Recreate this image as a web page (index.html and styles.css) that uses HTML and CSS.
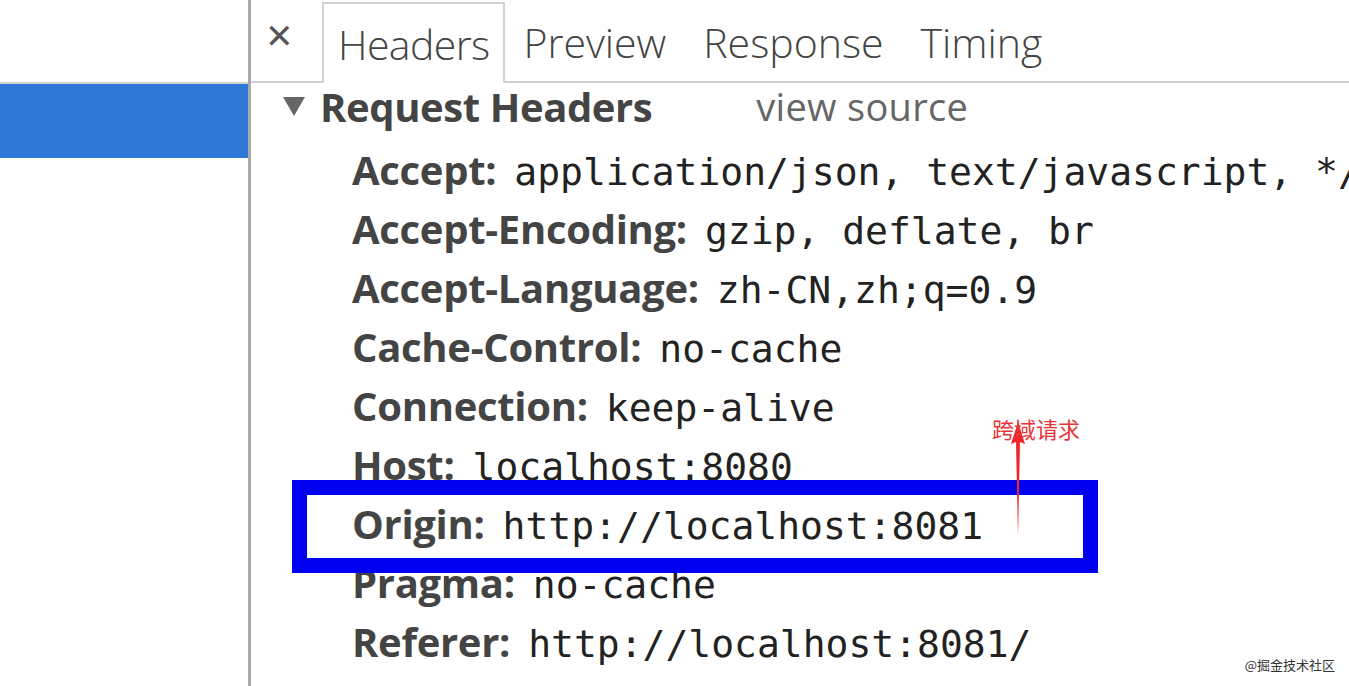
FILE: index.html
```html
<!DOCTYPE html>
<html lang="en">
<head>
  <meta charset="UTF-8">
  <title>Request Headers</title>
  <link rel="stylesheet" href="styles.css">
</head>
<body>
  <div class="page">
    <div class="sidebar">
      <div class="side-top"></div>
      <div class="side-selected"></div>
    </div>

    <div class="panel">
      <div class="tabs">
        <span class="close">&#x2715;</span>
        <span class="tab active">Headers</span>
        <span class="tab">Preview</span>
        <span class="tab">Response</span>
        <span class="tab">Timing</span>
      </div>

      <div class="section-title">
        <span class="arrow-down"></span>
        <span class="title">Request Headers</span>
        <span class="view-source">view source</span>
      </div>

      <div class="headers">
        <div class="row"><b>Accept:</b><span class="val">application/json, text/javascript, */*</span></div>
        <div class="row"><b>Accept-Encoding:</b><span class="val">gzip, deflate, br</span></div>
        <div class="row"><b>Accept-Language:</b><span class="val">zh-CN,zh;q=0.9</span></div>
        <div class="row"><b>Cache-Control:</b><span class="val">no-cache</span></div>
        <div class="row"><b>Connection:</b><span class="val">keep-alive</span></div>
        <div class="row"><b>Host:</b><span class="val">localhost:8080</span></div>
        <div class="row"><b>Origin:</b><span class="val">http://localhost:8081</span></div>
        <div class="row"><b>Pragma:</b><span class="val">no-cache</span></div>
        <div class="row"><b>Referer:</b><span class="val">http://localhost:8081/</span></div>
      </div>
    </div>

    <!-- annotations drawn over the screenshot -->
    <div class="mark-box"></div>
    <svg class="mark-arrow" width="20" height="120" viewBox="0 0 20 120">
      <polygon points="10,0 17,22 12,20 10,115 8,20 3,22" fill="#f0262a"/>
    </svg>
    <div class="mark-label">跨域请求</div>
    <div class="watermark">@掘金技术社区</div>
  </div>
</body>
</html>
```

FILE: styles.css
```css
* {
  box-sizing: border-box;
}

body {
  margin: 0;
  background: #fff;
  color: #333;
  font-family: "Open Sans", "Noto Sans", sans-serif;
}

.page {
  position: relative;
  display: flex;
  width: 1349px;
  height: 686px;
  overflow: hidden;
}

.sidebar {
  width: 251px;
  flex-shrink: 0;
  border-right: 3px solid #a9a9a9;
}

.side-top {
  height: 84px;
  border-bottom: 2px solid #d6d6d6;
}

.side-selected {
  height: 74px;
  background: #2f78d8;
}

.panel {
  flex: 1;
}

.tabs {
  display: flex;
  align-items: flex-end;
  height: 83px;
  border-bottom: 2px solid #cfcfcf;
  padding-left: 14px;
}

.close {
  align-self: center;
  margin-top: -10px;
  width: 57px;
  font-size: 34px;
  font-weight: 700;
  color: #555;
  font-family: "DejaVu Sans", sans-serif;
}

.tab {
  height: 79px;
  padding: 0 18px 0 19px;
  font-size: 41px;
  font-weight: 300;
  color: #444;
  line-height: 80px;
}

.tab.active {
  border: 2px solid #d2d2d2;
  border-bottom: none;
  background: #fff;
  margin-bottom: -2px;
  height: 81px;
  padding: 0 13px 0 14px;
  letter-spacing: -0.6px;
}

.section-title {
  display: flex;
  align-items: center;
  height: 46px;
  padding-left: 32px;
}

.arrow-down {
  width: 0;
  height: 0;
  border-left: 11px solid transparent;
  border-right: 11px solid transparent;
  border-top: 19px solid #666;
  margin-right: 15px;
}

.title {
  font-size: 40px;
  font-weight: 700;
  color: #444;
  letter-spacing: -0.4px;
}

.view-source {
  margin-left: 104px;
  font-size: 38px;
  color: #666;
  letter-spacing: 0.3px;
}

.headers {
  padding-left: 101px;
  padding-top: 11px;
}

.row {
  height: 59px;
  line-height: 59px;
  white-space: nowrap;
  font-size: 40px;
}

.row b {
  font-weight: 700;
  color: #444;
  letter-spacing: -0.3px;
}

.val {
  margin-left: 18px;
  font-family: "DejaVu Sans Mono", monospace;
  font-size: 38px;
  color: #222;
}

.mark-box {
  position: absolute;
  left: 292px;
  top: 480px;
  width: 806px;
  height: 93px;
  border: 15px solid #0000f0;
}

.mark-arrow {
  position: absolute;
  left: 1008px;
  top: 422px;
}

.mark-label {
  position: absolute;
  left: 992px;
  top: 413px;
  font-family: "Noto Sans CJK SC", sans-serif;
  font-size: 22px;
  color: #e8353a;
  line-height: 30px;
}

.watermark {
  position: absolute;
  right: 14px;
  bottom: 12px;
  font-family: "Noto Sans CJK SC", sans-serif;
  font-size: 13px;
  color: #333;
}
```
